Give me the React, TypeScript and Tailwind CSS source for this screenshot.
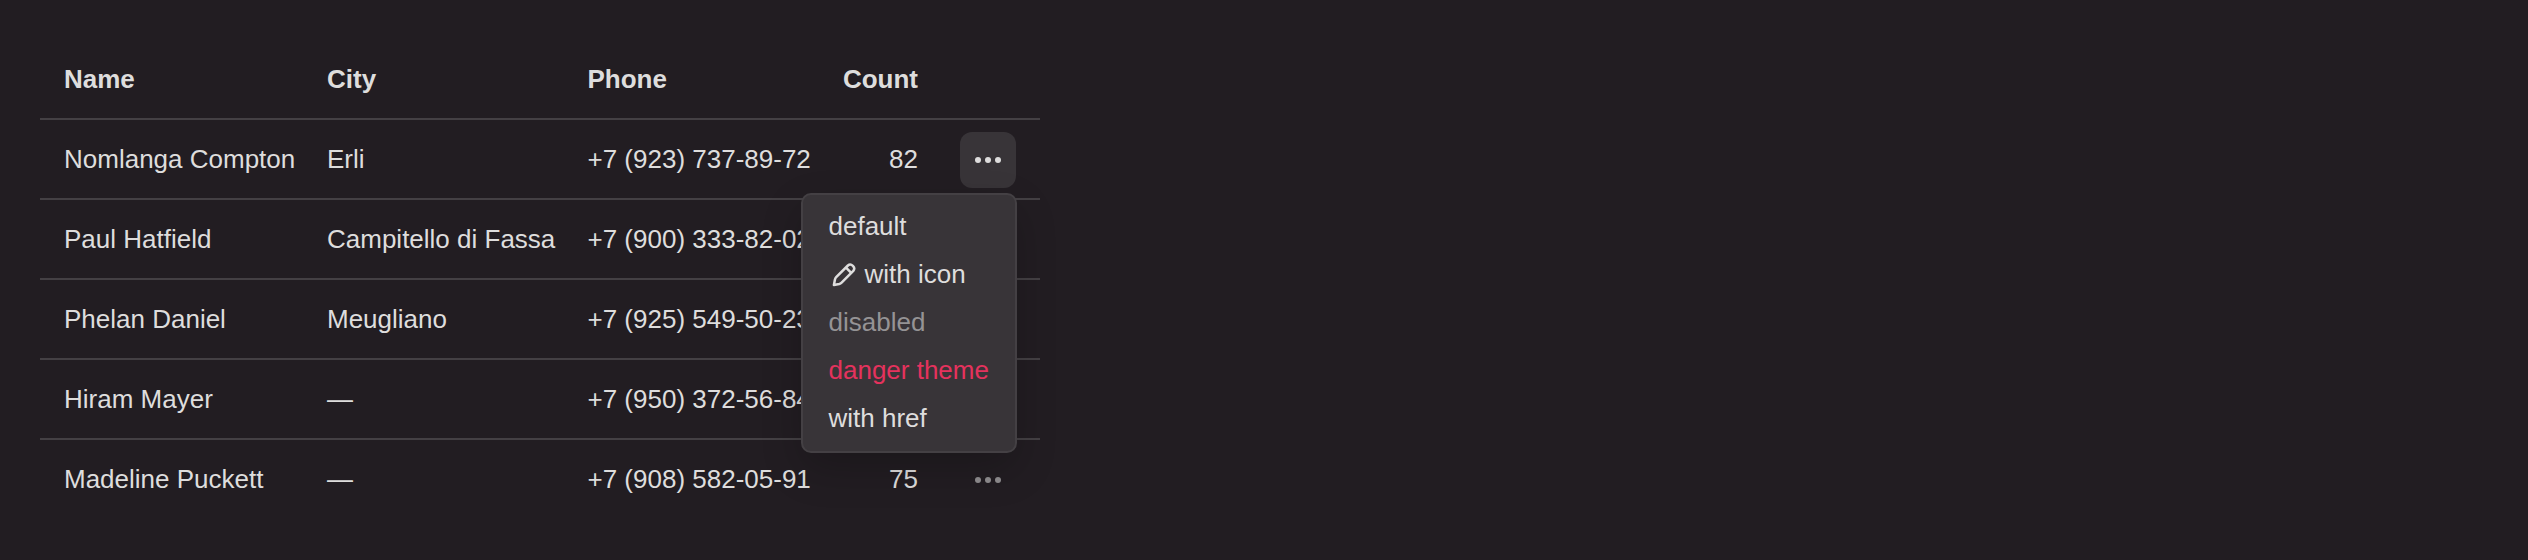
import React from 'react';

type Row = { name: string; city: string; phone: string; count?: number };

const rows: Row[] = [
  { name: 'Nomlanga Compton', city: 'Erli', phone: '+7 (923) 737-89-72', count: 82 },
  { name: 'Paul Hatfield', city: 'Campitello di Fassa', phone: '+7 (900) 333-82-02' },
  { name: 'Phelan Daniel', city: 'Meugliano', phone: '+7 (925) 549-50-23' },
  { name: 'Hiram Mayer', city: '—', phone: '+7 (950) 372-56-84' },
  { name: 'Madeline Puckett', city: '—', phone: '+7 (908) 582-05-91', count: 75 },
];

const columns = 'grid grid-cols-[271px_260.5px_255.5px_107px_106px] h-20 items-center';

function Dots() {
  return (
    <svg className="size-8" viewBox="0 0 16 16" fill="currentColor">
      <circle cx="3" cy="8" r="1.5" />
      <circle cx="8" cy="8" r="1.5" />
      <circle cx="13" cy="8" r="1.5" />
    </svg>
  );
}

function Pencil() {
  return (
    <svg
      className="mr-2 size-7 shrink-0"
      viewBox="0 0 28 28"
      fill="none"
      stroke="currentColor"
      strokeWidth="2.5"
      strokeLinejoin="round"
    >
      <path d="M4.9 25 L5.9 19.8 Q6.2 18.2 7.2 17.2 L18.9 5.5 Q21.3 3.4 23.9 5.8 Q26.4 8.4 24.3 10.9 L12.6 22.6 Q11.6 23.6 10.2 24 Z" />
      <path d="M17 7.6 L22.2 12.8" />
    </svg>
  );
}

function Menu() {
  return (
    <ul className="absolute -right-px top-[61px] z-10 w-[216px] rounded-[10px] border-2 border-[#444044] bg-[#383438] pt-[7px] pb-[9px] shadow-[0_16px_40px_rgba(0,0,0,0.2)]">
      <li className="flex h-12 items-center px-[25.5px]">default</li>
      <li className="flex h-12 items-center px-[25.5px]">
        <Pencil />
        with icon
      </li>
      <li className="flex h-12 items-center px-[25.5px] text-[#959395]">disabled</li>
      <li className="flex h-12 items-center px-[25.5px] text-[#e5325d]">danger theme</li>
      <li className="flex h-12 items-center px-[25.5px]">with href</li>
    </ul>
  );
}

export default function App() {
  return (
    <main className="h-[560px] w-full bg-[#221d22] p-10 font-['Liberation_Sans',Arial,sans-serif] text-[26px] leading-9 whitespace-nowrap text-[#dedddd]">
      <div className="w-[1000px]">
        <div className={`${columns} border-b-2 border-[#444044] font-bold`}>
          <div className="pl-6">Name</div>
          <div className="pl-4">City</div>
          <div className="pl-4">Phone</div>
          <div className="pr-4 text-right">Count</div>
          <div />
        </div>
        {rows.map((row, i) => (
          <div key={row.name} className={`${columns} border-b-2 border-[#444044] last:border-transparent`}>
            <div className="pl-6">{row.name}</div>
            <div className="pl-4">{row.city}</div>
            <div className="pl-4">{row.phone}</div>
            <div className="pr-4 text-right">{row.count}</div>
            <div className="flex justify-end pr-6">
              <div className="relative top-px">
                <button
                  className={`flex size-14 items-center justify-center rounded-xl ${i === 0 ? 'bg-[#383438] text-[#dedddd]' : 'text-[#908e90]'}`}
                >
                  <Dots />
                </button>
                {i === 0 && <Menu />}
              </div>
            </div>
          </div>
        ))}
      </div>
    </main>
  );
}
